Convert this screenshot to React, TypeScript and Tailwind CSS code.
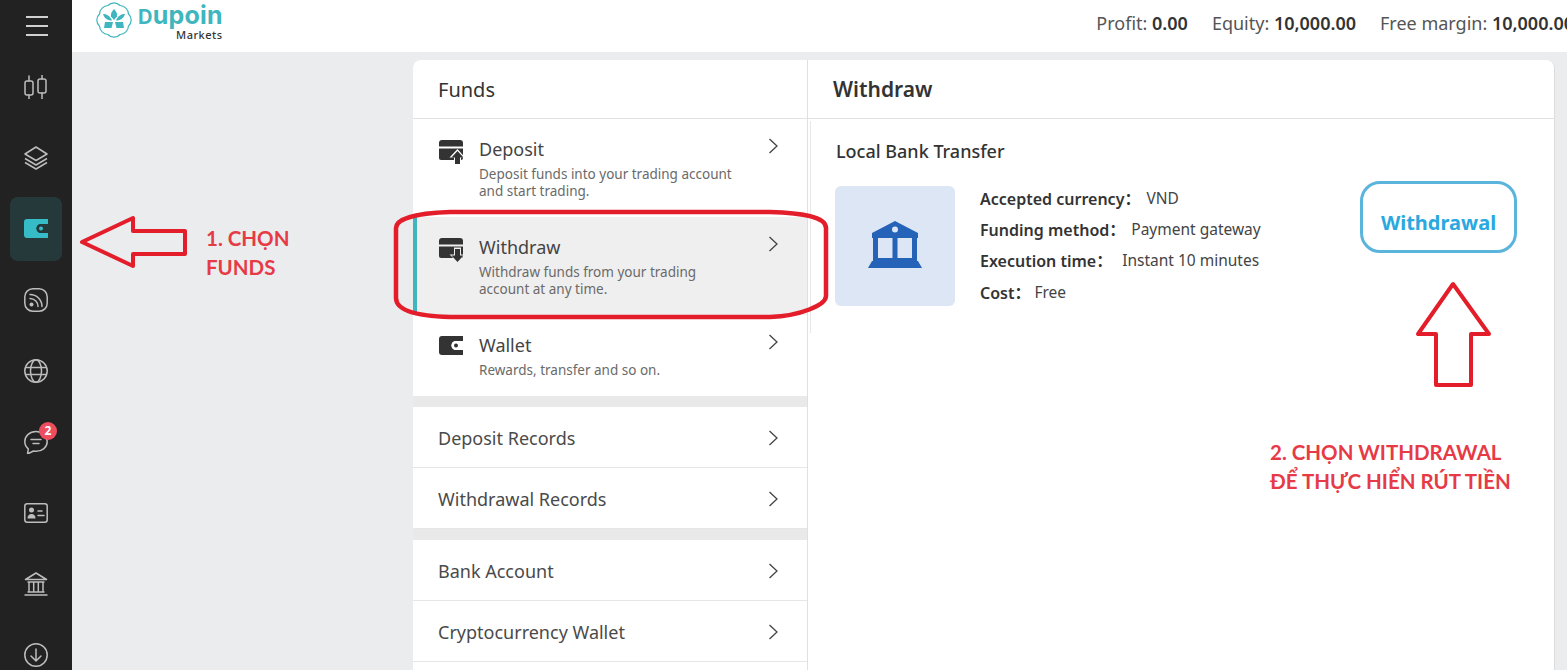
import React from "react";

const ic = "w-6 h-6 fill-none stroke-[#bdbdbd] stroke-[1.5]";

const Candle = () => (
  <svg viewBox="0 0 24 24" className={ic} strokeLinecap="round">
    <rect x="1" y="6" width="8" height="14" rx="2" />
    <rect x="14" y="4" width="8" height="14" rx="2" />
    <path d="M5 1v5M5 20v4M18 0v4M18 18v6" />
  </svg>
);
const Layers = () => (
  <svg viewBox="0 0 24 24" className={ic} strokeLinejoin="round">
    <path d="M12 1 23 8 12 14.500 1 8Z" />
    <path d="M1 12.500 12 19 23 12.500M1 16.500 12 23 23 16.500" />
  </svg>
);
const Rss = () => (
  <svg viewBox="0 0 24 24" className={ic}>
    <rect x="0.800" y="0.800" width="22.400" height="22.400" rx="8" />
    <path d="M6 10.500a8 8 0 0 1 8 8M6 6.500a12 12 0 0 1 12 12" strokeLinecap="round" />
    <circle cx="7.500" cy="16.500" r="2" fill="#bdbdbd" stroke="none" />
  </svg>
);
const Globe = () => (
  <svg viewBox="0 0 24 24" className={ic}>
    <circle cx="12" cy="12" r="11.200" />
    <ellipse cx="12" cy="12" rx="5.500" ry="11.200" />
    <path d="M1 8.500h22M1 15.500h22" />
  </svg>
);
const Chat = () => (
  <svg viewBox="0 0 24 24" className={ic} strokeLinejoin="round">
    <path d="M12 1.500C5.800 1.500.800 5.800.800 11.500c0 3.200 1.500 5.700 3.500 7.300L3.500 24l6-3c.8.200 1.700.300 2.500.300 6.200 0 11.200-4 11.200-9.800S18.200 1.500 12 1.500Z" />
    <path d="M7 9.500h10M9 13.500h6" strokeLinecap="round" />
  </svg>
);
const IdCard = () => (
  <svg viewBox="0 0 24 20" className="w-6 h-5 fill-none stroke-[#bdbdbd] stroke-[1.5]">
    <rect x="0.800" y="0.800" width="22.400" height="18.400" rx="2.500" />
    <circle cx="7.500" cy="7" r="2.500" fill="#bdbdbd" stroke="none" />
    <path d="M3.500 15.500c0-3 1.500-4.500 4-4.500s4 1.500 4 4.500Z" fill="#bdbdbd" stroke="none" />
    <path d="M14 8h4M14 12.500h6" strokeLinecap="round" />
  </svg>
);
const Bank = () => (
  <svg viewBox="0 0 24 24" className={ic}>
    <path d="M12 1 1.500 7.500h21Z" strokeLinejoin="round" />
    <path d="M3.500 10h17M3.500 20h17M5 10v10M9.700 10v10M14.300 10v10M19 10v10M.5 23h23" />
  </svg>
);
const Down = () => (
  <svg viewBox="0 0 24 24" className={ic} strokeLinecap="round" strokeLinejoin="round">
    <circle cx="12" cy="12" r="11.200" />
    <path d="M12 6v12M7 13l5 5 5-5" />
  </svg>
);
const WalletIcon = ({ color, hole }: { color: string; hole: string }) => (
  <svg viewBox="0 0 24 19" className="w-6 h-[19px]">
    <path d="M3 0h21v5h-7a4.500 4.500 0 0 0 0 9h7v5H3a3 3 0 0 1-3-3V3a3 3 0 0 1 3-3Z" fill={color} />
    <path d="M17 5h7v9h-7a4.500 4.500 0 0 1 0-9Z" fill={hole} />
    <circle cx="17" cy="9.500" r="2" fill={color} />
  </svg>
);
const CardArrow = ({ up, bg }: { up: boolean; bg: string }) => (
  <svg viewBox="0 0 24 24" className="w-6 h-6">
    <path d="M3 0h18a3 3 0 0 1 3 3v3.500H0V3a3 3 0 0 1 3-3Z" fill="#333" />
    <path d="M0 8.500h24V18a2 2 0 0 1-2 2H2a2 2 0 0 1-2-2Z" fill="#333" />
    {up ? (
      <>
        <path d="M18.500 9 10.500 17.500h4.500V24h7v-6.500h4Z" fill={bg} />
        <path d="M18.500 11 12.500 17.500h3.500V24h5v-6.500h3.500Z" fill="#333" />
      </>
    ) : (
      <>
        <path d="M15 9.500h7v7h4L18.500 24 10.500 16.500h4.500Z" fill={bg} />
        <path d="M16 11h5v6.500h3.500L18.500 24l-6-6.500H16Z" fill="#333" />
      </>
    )}
  </svg>
);
const Chevron = () => (
  <svg viewBox="0 0 10 16" className="w-2.5 h-4 fill-none stroke-[#444] stroke-[1.300]">
    <path d="M1.500 1 9 8l-7.500 7" />
  </svg>
);

const NavItem = ({ children }: { children: React.ReactNode }) => (
  <div className="relative h-[71px] flex items-center justify-center shrink-0">{children}</div>
);

const Feature = ({
  icon,
  title,
  lines,
  active,
  h,
}: {
  icon: React.ReactNode;
  title: string;
  lines: string[];
  active?: boolean;
  h: string;
}) => (
  <div className={`flex items-start pt-[18px] pl-[22px] pr-[29px] border-l-4 ${h} ${active ? "bg-[#efefef] border-[#3fb6bd]" : "bg-white border-transparent"}`}>
    <div className="w-6 mt-[3px] shrink-0">{icon}</div>
    <div className="ml-4 flex-1">
      <div className="text-[18px] leading-[24px] text-[#444]">{title}</div>
      <div className="mt-[5px] text-[13.500px] leading-[17px] text-[#6a6a6a]">
        {lines.map((l) => (
          <div key={l}>{l}</div>
        ))}
      </div>
    </div>
    <div className="mt-[1px]">
      <Chevron />
    </div>
  </div>
);

const Row = ({ label }: { label: string }) => (
  <div className="h-[61px] flex items-center justify-between pt-[2px] pl-[25px] pr-[29px] border-b border-[#e6e6e6] text-[18px] text-[#4a4a4a]">
    <span>{label}</span>
    <Chevron />
  </div>
);

const Info = ({ k, v, gap }: { k: string; v: string; gap: string }) => (
  <div className="h-[31px] flex items-center text-[#444]">
    <span className="text-[16px] font-semibold text-[#333]">{k}</span>
    <span className={`text-[16px] font-semibold text-[#333] ${gap}`}>：</span>
    <span className="text-[15.500px]">{v}</span>
  </div>
);

const Stat = ({ k, v }: { k: string; v: string }) => (
  <span className="text-[#555] whitespace-nowrap">
    {k}: <b className="font-semibold text-[#333]">{v}</b>
  </span>
);

export default function App() {
  return (
    <div className="relative flex h-[670px] w-[1567px] overflow-hidden bg-[#ebecee] font-['Noto_Sans','Open_Sans','Noto_Sans_CJK_SC',sans-serif]">
      <aside className="w-[72px] shrink-0 bg-[#222222] flex flex-col">
        <div className="h-[51px] shrink-0 flex flex-col items-center justify-center gap-[7px] pl-[1px]">
          <div className="w-[22px] h-[2px] bg-[#d0d0d0]" />
          <div className="w-[22px] h-[2px] bg-[#d0d0d0]" />
          <div className="w-[22px] h-[2px] bg-[#d0d0d0]" />
        </div>
        <NavItem><Candle /></NavItem>
        <NavItem><Layers /></NavItem>
        <NavItem>
          <div className="w-[52px] h-[64px] rounded-lg bg-[#25393b] flex items-center justify-center">
            <WalletIcon color="#35bcc6" hole="#25393b" />
          </div>
        </NavItem>
        <NavItem><Rss /></NavItem>
        <NavItem><Globe /></NavItem>
        <NavItem>
          <Chat />
          <span className="absolute left-[39px] top-[16px] w-[18px] h-[18px] rounded-full bg-[#ee4d5f] text-white text-[12px] font-bold flex items-center justify-center">2</span>
        </NavItem>
        <NavItem><IdCard /></NavItem>
        <NavItem><Bank /></NavItem>
        <NavItem><Down /></NavItem>
      </aside>

      <div className="flex-1 min-w-0 flex flex-col">
        <header className="h-[52px] shrink-0 bg-white flex items-center justify-between pl-[24px] overflow-hidden">
          <div className="flex items-start h-[42px] -mt-[8px]">
            <svg viewBox="0 0 36 36" className="w-[36px] h-[36px] mt-[1px]">
              <path d="M12 3.500A8 8 0 0 1 24 3.500A9 9 0 0 1 32.500 12A8 8 0 0 1 32.500 24A9 9 0 0 1 24 32.500A8 8 0 0 1 12 32.500A9 9 0 0 1 3.500 24A8 8 0 0 1 3.500 12A9 9 0 0 1 12 3.500Z" fill="none" stroke="#3fb6bd" strokeWidth="1.200" />
              <path d="M18 7c2.500 2.500 3.500 5 3 7.500L18 18l-3-3.500c-.5-2.500.5-5 3-7.500Z" fill="#3fb6bd" />
              <path d="M7 12c3.500 0 7 1.500 9 6.500-3.500 0-7.500-1.500-9-6.500ZM29 12c-3.500 0-7 1.500-9 6.500 3.500 0 7.500-1.500 9-6.500Z" fill="#3fb6bd" />
              <path d="M9 20h8l-1.500 6H8ZM27 20h-8l1.500 6H28Z" fill="#3fb6bd" />
            </svg>
            <div className="ml-[6px] flex flex-col items-end">
              <div className="text-[25px] leading-[24px] font-bold text-[#3fb6bd] font-['Inter',sans-serif] tracking-[0.200px] mt-[2px]">
                <span className="text-[20px]">D</span>upoin
              </div>
              <div className="text-[11px] leading-[12px] font-medium text-[#333] tracking-[0.500px]">Markets</div>
            </div>
          </div>
          <div className="flex gap-[24px] text-[18px] -mr-[7px] -mt-[6px]">
            <Stat k="Profit" v="0.00" />
            <Stat k="Equity" v="10,000.00" />
            <Stat k="Free margin" v="10,000.00" />
          </div>
        </header>

        <main className="flex-1 min-h-0 flex pl-[341px] pt-2">
          <section className="w-[395px] shrink-0 bg-[#e9e9e9] rounded-tl-lg border-r border-[#e0e0e0] overflow-hidden">
            <div className="h-[59px] bg-white border-b border-[#e2e2e2] pl-[25px] pt-[1px] flex items-center text-[20px] text-[#333]">Funds</div>
            <Feature h="h-[98px]" icon={<CardArrow up bg="#ffffff" />} title="Deposit" lines={["Deposit funds into your trading account", "and start trading."]} />
            <Feature h="h-[98px]" active icon={<CardArrow up={false} bg="#efefef" />} title="Withdraw" lines={["Withdraw funds from your trading", "account at any time."]} />
            <Feature h="h-[81px]" icon={<WalletIcon color="#333333" hole="#ffffff" />} title="Wallet" lines={["Rewards, transfer and so on."]} />
            <div className="mt-[11px] bg-white">
              <Row label="Deposit Records" />
              <Row label="Withdrawal Records" />
            </div>
            <div className="mt-[11px] bg-white">
              <Row label="Bank Account" />
              <Row label="Cryptocurrency Wallet" />
              <div className="h-[61px]" />
            </div>
          </section>

          <section className="w-[747px] shrink-0 bg-white rounded-tr-lg border-r border-[#dcdcdc]">
            <div className="h-[59px] border-b border-[#e2e2e2] pl-[25px] pt-[2px] flex items-center text-[21px] font-semibold text-[#333]">Withdraw</div>
            <div className="h-[212px] ml-[2px] mt-[2px] border-l border-[#e8e8e8] pl-[24px] pr-[37px] pt-[18px]">
              <div className="pl-[1px] text-[18px] leading-[24px] font-medium text-[#333]">Local Bank Transfer</div>
              <div className="mt-[23px] flex items-start">
                <div className="w-[120px] h-[120px] rounded-md bg-[#dce6f4] flex items-center justify-center">
                  <svg viewBox="0 0 54 47" className="w-[54px] h-[47px] -mt-[4px]">
                    <path d="M27 0 50 12V17H4V12Z" fill="#2563b8" />
                    <circle cx="27" cy="8.500" r="3" fill="#dce6f4" />
                    <path d="M5 17h5v23H5ZM24.500 17h5v23h-5ZM44 17h5v23h-5ZM5 37h44v3H5Z" fill="#2563b8" />
                    <path d="M4 40H50L54 47H0Z" fill="#2563b8" />
                  </svg>
                </div>
                <div className="ml-[25px] -mt-[3px]">
                  <Info k="Accepted currency" v="VND" gap="w-[22px]" />
                  <Info k="Funding method" v="Payment gateway" gap="w-[22px]" />
                  <Info k="Execution time" v="Instant 10 minutes" gap="w-[26px]" />
                  <div className="mt-[1px]">
                    <Info k="Cost" v="Free" gap="w-[20px]" />
                  </div>
                </div>
                <div className="ml-auto -mt-[5px] w-[157px] h-[72px] pt-[12px] rounded-[20px] border-[3px] border-[#5ab4dc] flex items-center justify-center text-[20px] font-bold text-[#2aa8df]">
                  Withdrawal
                </div>
              </div>
            </div>
          </section>
        </main>
      </div>

      {/* annotations laid over the page */}
      <svg className="absolute left-0 top-0 w-[1567px] h-[670px] pointer-events-none" viewBox="0 0 1567 670" fill="none" stroke="#e31e2a" strokeLinejoin="round">
        <path d="M82 242 133 218V231H185V254H133V266Z" strokeWidth="4" />
        <path d="M1453 284 1418 334H1436V385H1471V334H1489Z" strokeWidth="4" />
        <path d="M450 212H770C800 213 826 216 826 228V296C826 305 800 316 770 317H450C415 316 396 310 396 298V228C396 218 420 213 450 212Z" strokeWidth="4.500" />
      </svg>
      <div className="absolute left-[206px] top-[224px] text-[20.500px] leading-[29px] font-bold text-[#e63a46] font-['Lato',sans-serif]">
        <div>1. CHỌN</div>
        <div>FUNDS</div>
      </div>
      <div className="absolute left-[1270px] top-[438px] text-[20.500px] leading-[29px] font-bold text-[#e63a46] font-['Lato',sans-serif] whitespace-nowrap">
        <div>2. CHỌN WITHDRAWAL</div>
        <div>ĐỂ THỰC HIỂN RÚT TIỀN</div>
      </div>
    </div>
  );
}
